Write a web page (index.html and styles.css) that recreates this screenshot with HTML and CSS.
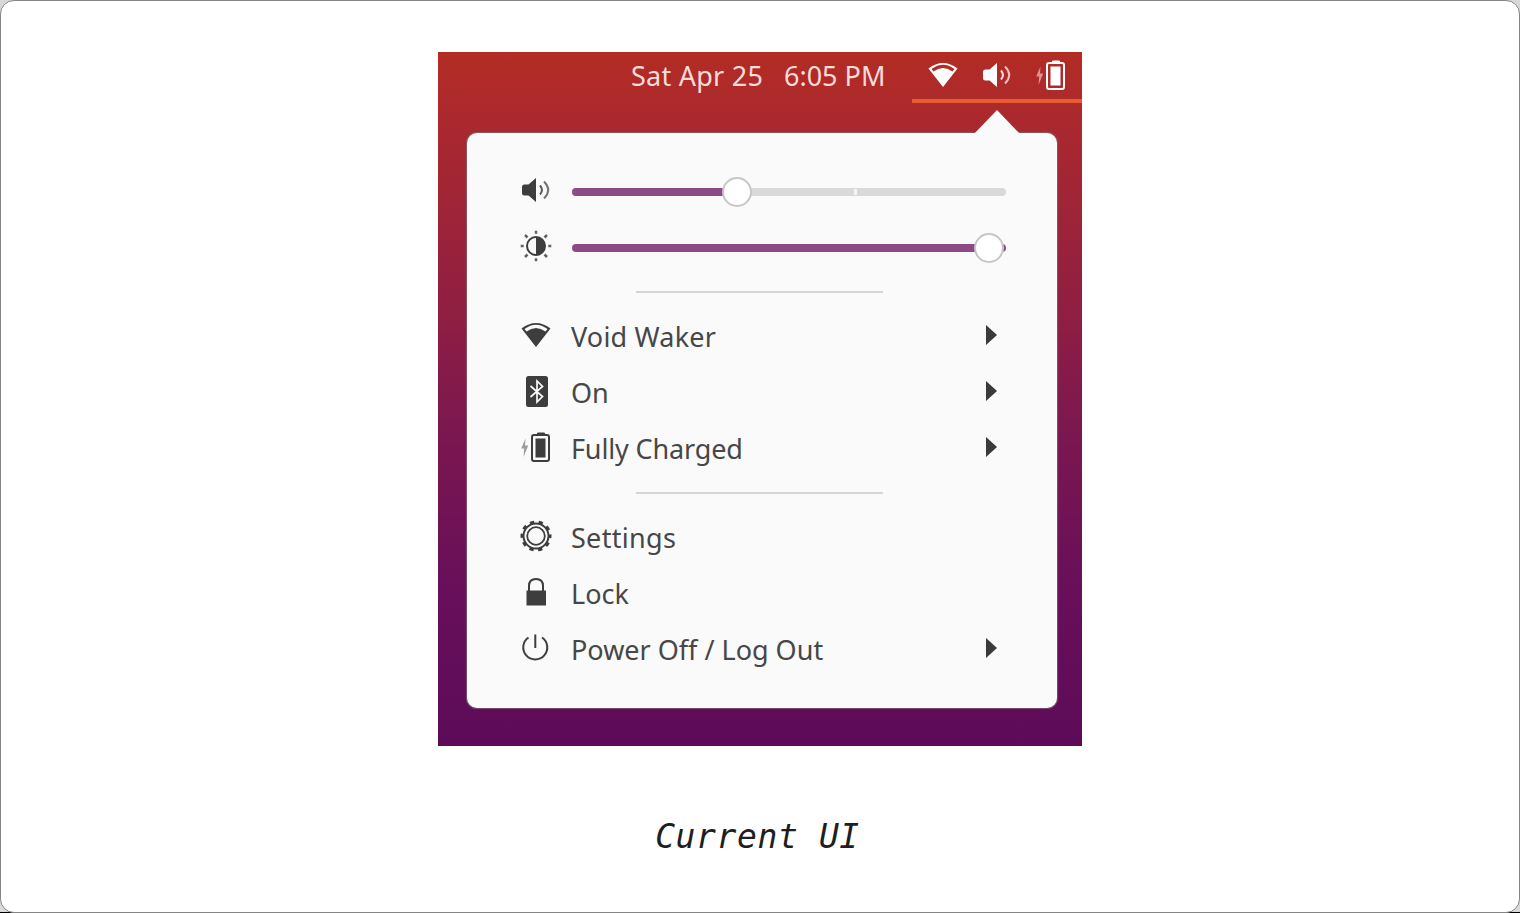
FILE: index.html
```html
<!DOCTYPE html>
<html lang="en">
<head>
<meta charset="utf-8">
<title>Current UI</title>
<link rel="stylesheet" href="styles.css">
</head>
<body>
<svg width="0" height="0" class="defs" aria-hidden="true">
  <symbol id="wifi" viewBox="0 0 32 32">
    <path d="M1.500 9.500Q16 -1.500 30.500 9.500L16 28Z" fill="currentColor"/>
    <path class="wifi-gap" d="M4.500 10Q16 1.500 27.500 10L25.500 12.500Q16 5.500 6.500 12.500Z"/>
  </symbol>
  <symbol id="speaker" viewBox="0 0 32 32">
    <path d="M2 13Q2 10.500 4.500 10.500H8.500L16 4V28L8.500 21.500H4.500Q2 21.500 2 19Z" fill="currentColor"/>
    <path d="M20 11.500Q24 16 20 20.500" fill="none" stroke="currentColor" stroke-width="2" opacity=".85"/>
    <path class="outer-wave" d="M24 7.500Q32.500 16 24 24.500" fill="none" stroke="currentColor" stroke-width="2"/>
  </symbol>
  <symbol id="battery" viewBox="0 0 32 32">
    <path d="M5.500 7.500L1.200 17.500H4.200L3.500 26L8.200 14.500H5Z" fill="currentColor" opacity=".5"/>
    <path d="M17.500 3.500V2H24.500V3.500" fill="currentColor" stroke="currentColor"/>
    <rect x="12" y="4" width="17" height="26" rx="2" fill="none" stroke="currentColor" stroke-width="2"/>
    <rect x="15.500" y="7.500" width="10" height="19" fill="currentColor"/>
  </symbol>
</svg>
<main class="frame">
  <section class="desktop">
    <header class="topbar">
      <div class="clock"><span class="date">Sat Apr 25</span><span class="time">6:05 PM</span></div>
      <div class="tray">
        <svg class="icon"><use href="#wifi"/></svg>
        <svg class="icon"><use href="#speaker"/></svg>
        <svg class="icon"><use href="#battery"/></svg>
      </div>
    </header>
    <div class="panel">
      <div class="pointer"></div>
      <div class="row">
        <svg class="icon"><use href="#speaker"/></svg>
        <div class="slider"><div class="fill" style="width:38%"></div><i class="tick"></i><b class="knob" style="left:38.1%"></b></div>
      </div>
      <div class="row">
        <svg class="icon" viewBox="0 0 32 32">
          <circle cx="16" cy="16" r="9" fill="none" stroke="currentColor" stroke-width="2"/>
          <path d="M16 7A9 9 0 0 1 16 25Z" fill="currentColor"/>
          <path d="M16 .700V3.700M16 28.300V31.300M.700 16H3.700M28.300 16H31.300M5 5L7.500 7.500M24.500 24.500L27 27M5 27L7.500 24.500M24.500 7.500L27 5" stroke="currentColor" stroke-width="2.500" opacity=".8"/>
        </svg>
        <div class="slider full"><div class="fill" style="width:100%"></div><b class="knob" style="left:96.1%"></b></div>
      </div>
      <hr class="divider">
      <div class="row"><svg class="icon"><use href="#wifi"/></svg><span class="label l-wifi">Void Waker</span><i class="arrow"></i></div>
      <div class="row">
        <svg class="icon" viewBox="0 0 32 32">
          <rect x="6" y="1" width="22" height="31" rx="2.500" fill="currentColor"/>
          <path d="M10.500 11L22.500 21.500L17 27V6L22.500 11.500L10.500 22" fill="none" stroke="#fafafa" stroke-width="1.700"/>
        </svg>
        <span class="label l-on">On</span><i class="arrow"></i>
      </div>
      <div class="row"><svg class="icon"><use href="#battery"/></svg><span class="label l-charge">Fully Charged</span><i class="arrow"></i></div>
      <hr class="divider">
      <div class="row">
        <svg class="icon" viewBox="0 0 32 32">
          <circle cx="16" cy="16" r="14" fill="none" stroke="currentColor" stroke-width="3" stroke-dasharray="4.200 4.596" stroke-dashoffset="2.100"/>
          <circle cx="16" cy="16" r="12.500" fill="none" stroke="currentColor" stroke-width="2"/>
          <circle cx="16" cy="16" r="8.800" fill="none" stroke="currentColor" stroke-width="1.800"/>
        </svg>
        <span class="label l-settings">Settings</span>
      </div>
      <div class="row">
        <svg class="icon" viewBox="0 0 32 32">
          <rect x="6.500" y="14.500" width="19.500" height="15" fill="currentColor"/>
          <path d="M9 15V10Q9 3 16 3T23 10V15" fill="none" stroke="currentColor" stroke-width="2"/>
        </svg>
        <span class="label l-lock">Lock</span>
      </div>
      <div class="row">
        <svg class="icon" viewBox="0 0 32 32">
          <path d="M8.500 5.500A12 12 0 1 0 22 5.500M15.300 2.500V16" fill="none" stroke="currentColor" stroke-width="2"/>
        </svg>
        <span class="label l-power">Power Off / Log Out</span><i class="arrow"></i>
      </div>
    </div>
  </section>
  <p class="caption">Current UI</p>
</main>
</body>
</html>
```
FILE: styles.css
```css
* { box-sizing: border-box; }
html { background: linear-gradient(#d8d8d8 912px, #000 912px); }
body { margin: 0; height: 100vh; overflow: hidden; font-family: "Noto Sans", sans-serif; }
.defs { position: absolute; }
.frame {
  height: 913px; padding-top: 51px;
  display: flex; flex-direction: column; align-items: center;
  background: #fff; border: 1px solid #858585; border-radius: 14px;
}
.desktop {
  width: 644px; height: 694px; flex: none;
  display: flex; flex-direction: column;
  background: linear-gradient(#b32c24 0%, #a92830 12%, #93203f 34%, #7b1750 55%, #670f5a 78%, #5d0b58 100%);
}
.topbar { height: 51px; flex: none; display: flex; justify-content: flex-end; color: #f9dcd9; }
.clock { display: flex; width: 281px; padding-top: 5px; font-size: 27px; line-height: 38px; white-space: pre; }
.date { width: 153px; letter-spacing: .25px; }
.tray {
  --gap: #b22c26;
  width: 170px; height: 51px; padding: 7px 15px 0 15px;
  display: flex; justify-content: space-between;
  border-bottom: 4px solid #e95c31; color: #fff;
}
.icon { display: block; width: 32px; height: 32px; flex: none; overflow: visible; }
.wifi-gap { fill: var(--gap); }
.outer-wave { opacity: .7; }
.panel {
  --gap: #fafafa;
  position: relative; width: 590px; height: 575px; margin: 30px 0 0 29px; padding: 30px 50px 0 53px;
  background: #fafafa; border-radius: 10px; color: #3d3d3d;
  box-shadow: 0 0 1px 1px rgba(125, 110, 115, .7);
}
.pointer {
  position: absolute; left: 506px; top: -23px; width: 48px; height: 25px;
  background: #fafafa; clip-path: polygon(0 100%, 50% 0, 100% 100%);
}
.row { height: 56px; display: flex; align-items: center; gap: 20px; }
.row .icon { margin-top: -2px; }
.label { flex: 1; margin-left: -1px; font-size: 27px; line-height: 40px; padding-top: 1px; white-space: nowrap; color: #474747; }
.l-wifi { letter-spacing: .2px; }
.l-charge { letter-spacing: -.15px; }
.l-settings { letter-spacing: .3px; }
.arrow { width: 11px; height: 20px; margin: -2px 10px 0 0; background: #3a3a3a; clip-path: polygon(0 0, 100% 50%, 0 100%); }
.slider { position: relative; width: 434px; height: 8px; margin: 1px 0 0 -1px; border-radius: 4px; background: #d9d9d9; left: 1px; }
.full { background: none; }
.fill { height: 8px; border-radius: 4px; background: #8d4a87; }
.tick { position: absolute; left: 282px; top: 1px; width: 3px; height: 6px; background: #f5f5f5; }
.knob {
  position: absolute; top: -11px; width: 30px; height: 30px; margin-left: -15px;
  border: 2px solid #c6c6c6; border-radius: 50%; background: #fff;
}
.divider { width: 247px; height: 2px; margin: 16px 0 15px 116px; border: 0; background: #d6d6d6; }
.caption {
  margin: 67px 5px 0 0; white-space: nowrap;
  font: italic 33px/48px "DejaVu Sans Mono", monospace; letter-spacing: .6px; color: #1e1e1e;
}
```
